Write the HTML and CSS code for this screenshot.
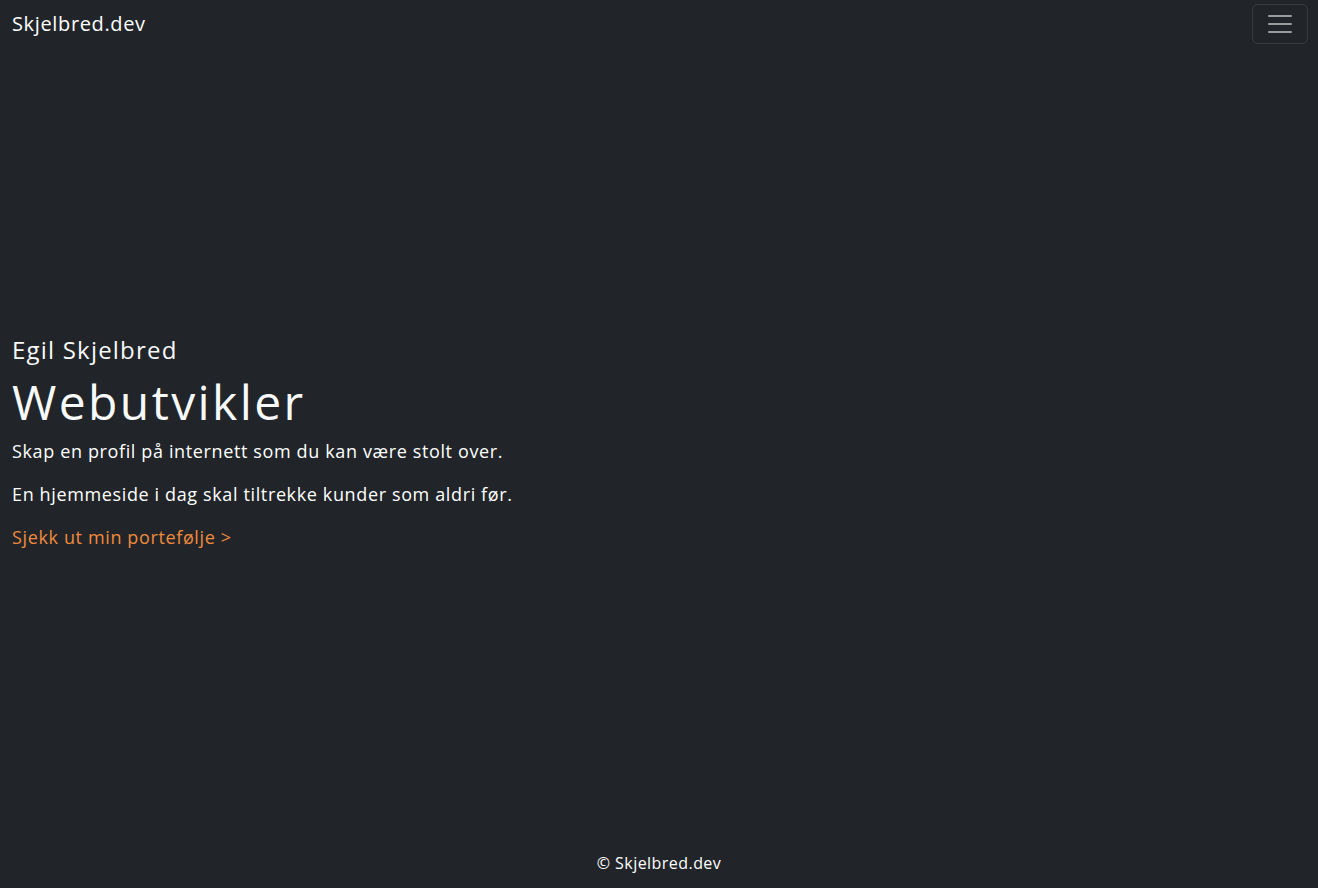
FILE: index.html
```html
<!DOCTYPE html>
<html lang="no">
<head>
<meta charset="utf-8">
<title>Skjelbred.dev</title>
<link rel="stylesheet" href="styles.css">
</head>
<body>
<div class="page">
  <nav class="navbar">
    <a class="brand" href="#">Skjelbred.dev</a>
    <button class="toggler" type="button" aria-label="Meny">
      <svg width="30" height="30" viewBox="0 0 30 30" aria-hidden="true">
        <path d="M4 7h22M4 15h22M4 23h22" stroke="rgba(255,255,255,0.55)" stroke-width="2" stroke-linecap="round"/>
      </svg>
    </button>
  </nav>
  <main class="hero">
    <div class="hero-inner">
      <h4 class="name">Egil Skjelbred</h4>
      <h1 class="title">Webutvikler</h1>
      <p class="text">Skap en profil på internett som du kan være stolt over.</p>
      <p class="text">En hjemmeside i dag skal tiltrekke kunder som aldri før.</p>
      <p class="text last"><a class="link" href="#">Sjekk ut min portefølje &gt;</a></p>
    </div>
  </main>
  <footer class="footer">© Skjelbred.dev</footer>
</div>
</body>
</html>
```
FILE: styles.css
```css
* { box-sizing: border-box; }
html, body { margin: 0; padding: 0; }
body {
  background: #212529;
  color: #fff;
  font-family: "Open Sans", "DejaVu Sans", sans-serif;
  font-weight: 500;
}
.page {
  min-height: 888px;
  display: flex;
  flex-direction: column;
}
.navbar {
  height: 48px;
  padding: 4px 10px 4px 12px;
  display: flex;
  align-items: center;
  justify-content: space-between;
}
.brand {
  color: #fff;
  text-decoration: none;
  font-size: 20px;
  line-height: 30px;
  letter-spacing: 0.032em;
}
.toggler {
  width: 56px;
  height: 40px;
  padding: 0;
  background: transparent;
  border: 1px solid rgba(255,255,255,0.1);
  border-radius: 6px;
  display: flex;
  align-items: center;
  justify-content: center;
}
.toggler svg { display: block; }
.hero {
  flex: 1;
  display: flex;
  align-items: center;
  padding: 0 12px;
}
.name {
  margin: 0 0 8px;
  font-size: 24px;
  line-height: 1.2;
  font-weight: 500;
  letter-spacing: 0.05em;
  color: #f8f9fa;
}
.title {
  margin: 0 0 8px;
  font-size: 48px;
  line-height: 1.2;
  font-weight: 400;
  letter-spacing: 0.05em;
  color: #f8f9fa;
}
.text {
  margin: 0 0 16px;
  font-size: 18px;
  line-height: 27px;
  letter-spacing: 0.035em;
}
.text.last { margin-bottom: 0; }
.link {
  color: #f08a3c;
  text-decoration: none;
}
.footer {
  text-align: center;
  font-size: 16px;
  line-height: 24px;
  letter-spacing: 0.028em;
  padding: 12px 0 13px;
}
```
